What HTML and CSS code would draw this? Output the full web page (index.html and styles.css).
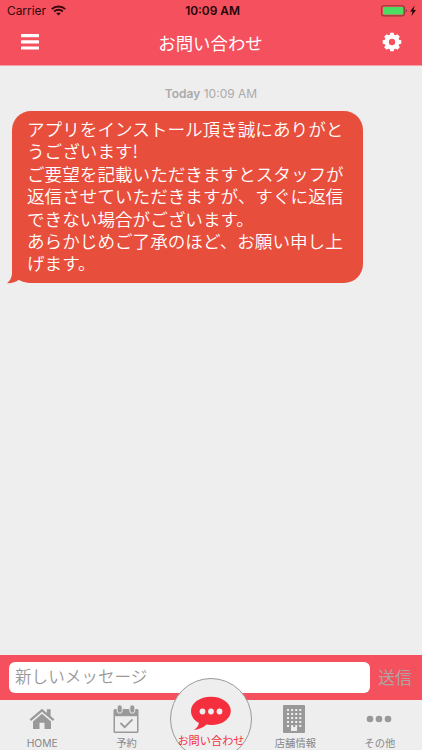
FILE: index.html
```html
<!DOCTYPE html>
<html lang="ja">
<head>
<meta charset="utf-8">
<title>お問い合わせ</title>
<link rel="stylesheet" href="styles.css">
</head>
<body>
<div class="app">
  <header class="header">
    <div class="status">
      <div class="carrier"><span>Carrier</span>
        <svg class="wifi" width="15" height="11" viewBox="0 0 15 11" fill="none" stroke="#35090e" stroke-width="2"><path d="M.8 4.1C4.5.5 10.5.5 14.2 4.1M3.2 6.5c2.4-2.2 6.200-2.200 8.600 0"/><path d="M7.500 10.600 5.200 8.300c1.300-1.100 3.300-1.100 4.600 0z" fill="#35090e" stroke="none"/></svg>
      </div>
      <div class="clock">10:09 AM</div>
      <div class="power">
        <svg width="37" height="12" viewBox="0 0 37 12"><rect x=".6" y=".7" width="22.8" height="10.2" rx="2.2" fill="none" stroke="#93363b" stroke-width="1.1"/><rect x="2" y="2.1" width="20" height="7.4" rx=".8" fill="#4bdc62"/><path d="M24.8 4v3.6q1.2-.5 1.2-1.8T24.8 4z" fill="#93363b"/><path d="M33.6.8 29 6.5h2.5l-1 4.5L35 5h-2.5z" fill="#240609"/></svg>
      </div>
    </div>
    <div class="titlebar">
      <svg class="menu" width="18" height="16" viewBox="0 0 18 16" fill="#fff"><rect width="18" height="3.2" rx=".5"/><rect y="6.2" width="18" height="3.2" rx=".5"/><rect y="12.4" width="18" height="3.2" rx=".5"/></svg>
      <h1>お問い合わせ</h1>
      <svg class="gear" width="20" height="20" viewBox="-10 -10 20 20"><g fill="#fff"><circle r="7.4"/><path id="t" d="M-2.400-6-1.800-9.300h3.600l.6 3.300v12l-.6 3.300h-3.600L-2.400 6z"/><use href="#t" transform="rotate(45)"/><use href="#t" transform="rotate(90)"/><use href="#t" transform="rotate(135)"/></g><circle r="3.2" fill="#f4505d"/></svg>
    </div>
  </header>
  <main class="chat">
    <div class="date"><b>Today</b> 10:09 AM</div>
    <div class="bubble">
      <svg class="tail" width="26" height="20" viewBox="0 0 26 20"><path d="M5 0v9Q5 15 0 19.200q7.500.2 11.700-3.400 4.300 3 12.300 3V14L12 0z" fill="#e84e3c"/></svg>
      <div class="message">アプリをインストール頂き誠にありがと<br>うございます!<br>ご要望を記載いただきますとスタッフが<br>返信させていただきますが、すぐに返信<br>できない場合がございます。<br>あらかじめご了承のほど、お願い申し上<br>げます。</div>
    </div>
  </main>
  <div class="composer">
    <div class="field">新しいメッセージ</div>
    <div class="send">送信</div>
  </div>
  <nav class="tabs">
    <div class="tab">
      <svg width="26" height="28" viewBox="0 0 26 28" fill="#999"><path d="M.6 14.300 13 3.700l4.900 4.200V4.200h3.700v6.900l3.800 3.200-1.500 1.800L13 6.800 2.100 16.100z"/><path d="M4 16.400l9-7.600 9 7.600v7.600h-6.500v-6.200h-5V24H4z"/></svg>
      <span class="home">HOME</span>
    </div>
    <div class="tab">
      <svg class="calendar" width="26" height="28" viewBox="0 0 26 28"><rect x=".5" y="4" width="25" height="24" rx="1.5" fill="#999"/><path d="M2 11.200h22v15.300H2z" fill="#eee"/><g fill="#999" stroke="#eee" stroke-width="1"><rect x="4.200" y="-.2" width="5" height="8.400" rx="2.500"/><rect x="16.800" y="-.2" width="5" height="8.400" rx="2.500"/></g><path d="m7.500 18 4.200 4.200 7.800-7.800" fill="none" stroke="#999" stroke-width="1.800"/></svg>
      <span>予約</span>
    </div>
    <div class="tab active">
      <div class="disc"></div>
      <svg class="talk" width="42" height="36" viewBox="0 0 42 36"><path d="M21 .8C9.800.8 1 7 1 15c0 5 3 9.500 8 12-.5 3-2.400 5.200-5 7 5.500-.4 9.500-2.800 12.500-5.400q2.200.4 4.500.4c11.200 0 19.800-6.200 19.800-14S32.200.8 21 .8z" fill="#f62f3e"/><g fill="#eee"><circle cx="12.500" cy="15.500" r="2.900"/><circle cx="21" cy="15.500" r="2.900"/><circle cx="29.500" cy="15.500" r="2.900"/></g></svg>
      <span>お問い合わせ</span>
    </div>
    <div class="tab">
      <svg class="building" width="22" height="28" viewBox="0 0 22 28"><rect width="22" height="28" rx="1" fill="#999"/><path d="M4 5h15M4 9h15M4 13h15M4 17h15M4 21h15" stroke="#eee" stroke-width="2" stroke-dasharray="2 2.100"/><path d="M8 22h6v4H8z" fill="#eee"/></svg>
      <span>店舗情報</span>
    </div>
    <div class="tab">
      <svg class="more" width="26" height="28" viewBox="0 0 26 28" fill="#999"><circle cx="4" cy="14" r="3.300"/><circle cx="13" cy="14" r="3.300"/><circle cx="22" cy="14" r="3.300"/></svg>
      <span>その他</span>
    </div>
  </nav>
</div>
</body>
</html>
```
FILE: styles.css
```css
* { box-sizing: border-box; }
body { margin: 0; font-family: Inter, "Noto Sans CJK JP", sans-serif; }
svg { display: block; flex: none; }
.app { width: 422px; height: 750px; display: flex; flex-direction: column; background: #eee; overflow: hidden; }
.header { height: 66px; flex: none; background: #f4505d; border-bottom: 1px solid #f5a3a9; }
.status { height: 22px; display: grid; grid-template-columns: 1fr auto 1fr; align-items: center; padding: 0 4px 0 7px; font-size: 11.9px; line-height: 22px; color: #35090e; }
.carrier { display: flex; align-items: center; gap: 5px; }
.wifi { margin-top: -1px; }
.clock { font-weight: 600; color: #240609; }
.power { justify-self: end; margin-top: -1px; }
.titlebar { height: 43px; display: flex; align-items: center; justify-content: space-between; padding: 0 20px 3px 21px; color: #fff; }
.titlebar h1 { margin: 3px 0 0; font-size: 17.4px; line-height: 26px; font-weight: 400; }
.chat { flex: 1; padding: 20px 12px 0; }
.date { height: 15px; font-size: 12px; line-height: 15px; text-align: center; color: #aaa; }
.date b { font-weight: 600; }
.bubble { position: relative; width: 351px; height: 172px; margin-top: 10px; padding: 7px 0 0 15px; border-radius: 19px; background: #e84e3c; color: #fff; }
.message { position: relative; font-family: "Noto Sans CJK JP", sans-serif; font-weight: 350; font-size: 17.6px; line-height: 22.4px; white-space: nowrap; }
.tail { position: absolute; left: -5px; bottom: -1px; }
.composer { height: 45px; flex: none; display: flex; align-items: center; padding: 0 9px; background: #f4505d; }
.field { width: 361px; height: 31px; padding-left: 6px; border-radius: 6px; background: #fff; font-size: 16.6px; line-height: 31px; color: #999; font-weight: 350; }
.send { margin-left: 8px; font-size: 17px; line-height: 30px; color: #b3a1a3; }
.tabs { height: 50px; flex: none; display: grid; grid-template-columns: repeat(5, 1fr); }
.tab { display: flex; flex-direction: column; align-items: center; padding-top: 5px; font-size: 10.3px; line-height: 14px; color: #888; white-space: nowrap; }
.tab span { margin-top: 3px; }
.calendar, .building, .more { margin-right: 2px; }
.active { position: relative; padding-top: 0; font-size: 11.2px; color: #f62f3e; }
.active .talk { position: relative; margin-top: -4px; }
.active span { position: relative; margin-top: 2px; }
.disc { position: absolute; left: 50%; top: -22px; width: 82px; height: 82px; margin-left: -41px; border: 1px solid #999; border-radius: 50%; background: #eee; }
```
